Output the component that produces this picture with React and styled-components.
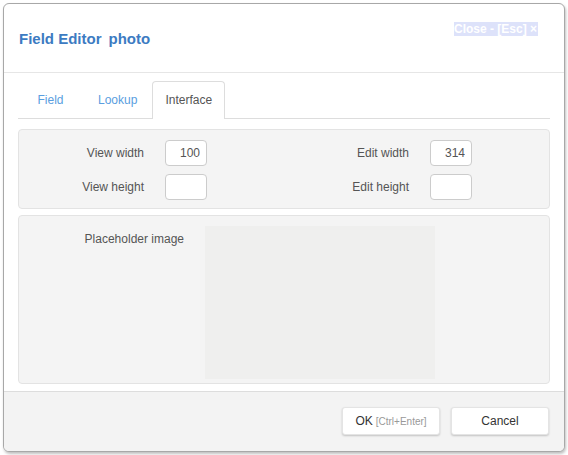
import React from "react";
import styled, { createGlobalStyle } from "styled-components";

const GlobalStyle = createGlobalStyle`
  html, body { margin: 0; padding: 0; background: #ffffff; }
  body { font-family: "Liberation Sans", Arial, sans-serif; }
  * { box-sizing: border-box; }
`;

const Page = styled.div`
  padding: 3px;
`;

const Dialog = styled.div`
  width: 562px;
  height: 449px;
  border: 1px solid #a8a8a8;
  border-radius: 6px;
  box-shadow: 1px 2px 3px rgba(0, 0, 0, 0.25);
  background: #ffffff;
  display: flex;
  flex-direction: column;
  overflow: hidden;
`;

const Header = styled.div`
  height: 69px;
  flex: none;
  display: flex;
  align-items: center;
  padding: 0 26px 0 15px;
  border-bottom: 1px solid #e6e6e6;
`;

const Title = styled.div`
  font-size: 15px;
  font-weight: bold;
  color: #3c7bc2;
`;

const Subject = styled.span`
  margin-left: 7px;
`;

const Close = styled.div`
  margin-left: auto;
  align-self: flex-start;
  margin-top: 18px;
  background: #dde2fa;
  color: #ffffff;
  font-size: 12px;
  font-weight: bold;
  line-height: 14px;
  padding: 0 1px 0 0;
  white-space: nowrap;
`;

const Body = styled.div`
  flex: 1;
  padding: 8px 14px 0 14px;
`;

const TabBar = styled.div`
  display: flex;
  gap: 2px;
  height: 38px;
  border-bottom: 1px solid #dddddd;
`;

const Tab = styled.div`
  min-width: 65px;
  height: 38px;
  padding: 0 12px 1px;
  display: flex;
  align-items: center;
  justify-content: center;
  font-size: 12px;
  border: 1px solid ${(p) => (p.$active ? "#dddddd" : "transparent")};
  border-bottom: none;
  border-radius: 4px 4px 0 0;
  background: ${(p) => (p.$active ? "#ffffff" : "transparent")};
  color: ${(p) => (p.$active ? "#555555" : "#5a9ee0")};
`;

const Panel = styled.div`
  margin-top: ${(p) => p.$gap}px;
  border: 1px solid #e3e3e3;
  border-radius: 4px;
  background: #f4f4f4;
`;

const SizeGrid = styled.div`
  display: grid;
  grid-template-columns: 1fr 1fr;
  row-gap: 8px;
  padding: 10px 0 8px;
`;

const FieldRow = styled.div`
  display: grid;
  grid-template-columns: ${(p) => p.$label}px ${(p) => p.$control}px;
  column-gap: 21px;
  align-items: ${(p) => (p.$top ? "start" : "center")};
  padding: ${(p) => (p.$top ? "10px 0 4px" : "0")};
`;

const Label = styled.div`
  text-align: right;
  font-size: 12px;
  color: #555555;
  padding-top: ${(p) => (p.$top ? "6px" : "0")};
`;

const NumberInput = styled.input`
  width: 42px;
  height: 26px;
  border: 1px solid #cccccc;
  border-radius: 4px;
  background: #ffffff;
  text-align: right;
  padding: 0 6px;
  font-family: "Liberation Sans", Arial, sans-serif;
  font-size: 12px;
  color: #555555;
  outline: none;
`;

const ImageBox = styled.div`
  height: 153px;
  background: #efefee;
`;

const Footer = styled.div`
  height: 60px;
  flex: none;
  border-top: 1px solid #dddddd;
  background: #f3f3f3;
  display: flex;
  justify-content: flex-end;
  align-items: flex-start;
  gap: 11px;
  padding: 15px 15px 0 0;
`;

const Button = styled.button`
  width: 98px;
  height: 28px;
  background: #ffffff;
  border: 1px solid #e4e4e4;
  border-radius: 3px;
  box-shadow: 0 1px 2px rgba(0, 0, 0, 0.2);
  font-family: "Liberation Sans", Arial, sans-serif;
  font-size: 12px;
  color: #333333;
  padding: 0;
  cursor: pointer;
`;

const Hint = styled.span`
  font-size: 10px;
  color: #999999;
  margin-left: 3px;
`;

const sizes = [
  { label: "View width", value: "100" },
  { label: "Edit width", value: "314" },
  { label: "View height", value: "" },
  { label: "Edit height", value: "" },
];

export default function App() {
  return (
    <>
      <GlobalStyle />
      <Page>
        <Dialog>
          <Header>
            <Title>
              Field Editor<Subject>photo</Subject>
            </Title>
            <Close>Close - [Esc] ×</Close>
          </Header>
          <Body>
            <TabBar>
              <Tab>Field</Tab>
              <Tab>Lookup</Tab>
              <Tab $active>Interface</Tab>
            </TabBar>
            <Panel $gap={10}>
              <SizeGrid>
                {sizes.map((s) => (
                  <FieldRow key={s.label} $label={125} $control={42}>
                    <Label>{s.label}</Label>
                    <NumberInput defaultValue={s.value} />
                  </FieldRow>
                ))}
              </SizeGrid>
            </Panel>
            <Panel $gap={6}>
              <FieldRow $label={165} $control={230} $top>
                <Label $top>Placeholder image</Label>
                <ImageBox />
              </FieldRow>
            </Panel>
          </Body>
          <Footer>
            <Button>
              OK<Hint>[Ctrl+Enter]</Hint>
            </Button>
            <Button>Cancel</Button>
          </Footer>
        </Dialog>
      </Page>
    </>
  );
}
